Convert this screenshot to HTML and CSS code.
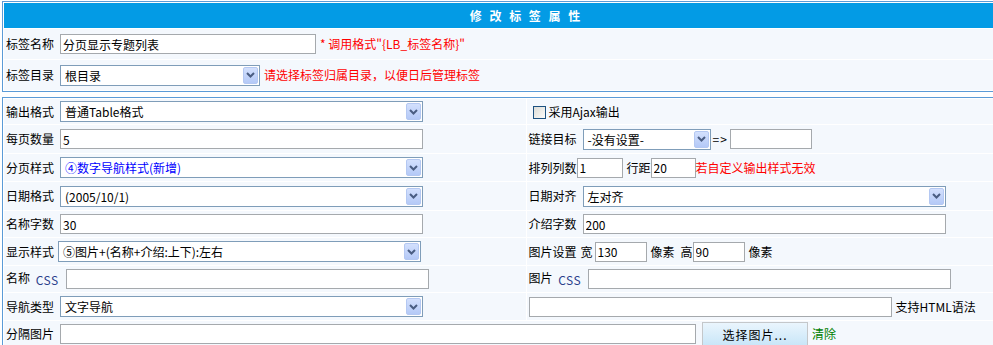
FILE: index.html
```html
<!DOCTYPE html>
<html lang="zh-CN">
<head>
<meta charset="utf-8">
<title>修改标签属性</title>
<link rel="stylesheet" href="styles.css">
</head>
<body>
<table class="tbl top">
  <tr><td class="head">修 改 标 签 属 性</td></tr>
  <tr class="trow"><td><span class="lab">标签名称</span><input class="txt w255" type="text" value="分页显示专题列表"><span class="red note">* 调用格式"{LB_标签名称}"</span></td></tr>
  <tr class="trow"><td><span class="lab">标签目录</span><span class="sel w200"><span class="v">根目录</span><span class="btn"><svg width="9" height="6" viewBox="0 0 9 6"><path d="M1 1 L4.5 4.5 L8 1" fill="none" stroke="#4a5d82" stroke-width="2"/></svg></span></span><span class="red note">请选择标签归属目录，以便日后管理标签</span></td></tr>
</table>

<table class="tbl main">
  <tr>
    <td class="l"><span class="lab">输出格式</span><span class="sel w363"><span class="v">普通Table格式</span><span class="btn"><svg width="9" height="6" viewBox="0 0 9 6"><path d="M1 1 L4.5 4.5 L8 1" fill="none" stroke="#4a5d82" stroke-width="2"/></svg></span></span></td>
    <td class="r"><span class="chk"></span><span class="chklab">采用Ajax输出</span></td>
  </tr>
  <tr>
    <td class="l"><span class="lab">每页数量</span><input class="txt w363" type="text" value="5"></td>
    <td class="r"><span class="lab">链接目标</span><span class="sel w128"><span class="v">-没有设置-</span><span class="btn"><svg width="9" height="6" viewBox="0 0 9 6"><path d="M1 1 L4.5 4.5 L8 1" fill="none" stroke="#4a5d82" stroke-width="2"/></svg></span></span><span class="arrow">=&gt;</span><input class="txt w82" type="text" value=""></td>
  </tr>
  <tr>
    <td class="l"><span class="lab">分页样式</span><span class="sel w363"><span class="v blue">④数字导航样式(新增)</span><span class="btn"><svg width="9" height="6" viewBox="0 0 9 6"><path d="M1 1 L4.5 4.5 L8 1" fill="none" stroke="#4a5d82" stroke-width="2"/></svg></span></span></td>
    <td class="r"><span>排列列数</span><input class="txt w46 tight" type="text" value="1"><span class="sp4">行距</span><input class="txt w45 tight" type="text" value="20"><span class="red">若自定义输出样式无效</span></td>
  </tr>
  <tr>
    <td class="l"><span class="lab">日期格式</span><span class="sel w363"><span class="v">(2005/10/1)</span><span class="btn"><svg width="9" height="6" viewBox="0 0 9 6"><path d="M1 1 L4.5 4.5 L8 1" fill="none" stroke="#4a5d82" stroke-width="2"/></svg></span></span></td>
    <td class="r"><span class="lab">日期对齐</span><span class="sel w363"><span class="v">左对齐</span><span class="btn"><svg width="9" height="6" viewBox="0 0 9 6"><path d="M1 1 L4.5 4.5 L8 1" fill="none" stroke="#4a5d82" stroke-width="2"/></svg></span></span></td>
  </tr>
  <tr>
    <td class="l"><span class="lab">名称字数</span><input class="txt w363" type="text" value="30"></td>
    <td class="r"><span class="lab">介绍字数</span><input class="txt w363" type="text" value="200"></td>
  </tr>
  <tr>
    <td class="l"><span class="lab lab4">显示样式</span><span class="sel w363"><span class="v">⑤图片+(名称+介绍:上下):左右</span><span class="btn"><svg width="9" height="6" viewBox="0 0 9 6"><path d="M1 1 L4.5 4.5 L8 1" fill="none" stroke="#4a5d82" stroke-width="2"/></svg></span></span></td>
    <td class="r"><span>图片设置</span><span class="sp4">宽</span><input class="txt w52 sm" type="text" value="130"><span class="sp4">像素</span><span class="sp6">高</span><input class="txt w52 tight" type="text" value="90"><span class="sp4">像素</span></td>
  </tr>
  <tr>
    <td class="l"><span class="lab lab5">名称 <span class="css">CSS</span></span><input class="txt w363" type="text" value=""></td>
    <td class="r"><span class="lab lab5">图片 <span class="css">CSS</span></span><input class="txt w363" type="text" value=""></td>
  </tr>
  <tr>
    <td class="l"><span class="lab">导航类型</span><span class="sel w363"><span class="v">文字导航</span><span class="btn"><svg width="9" height="6" viewBox="0 0 9 6"><path d="M1 1 L4.5 4.5 L8 1" fill="none" stroke="#4a5d82" stroke-width="2"/></svg></span></span></td>
    <td class="r"><input class="txt w363 tight" type="text" value=""><span class="sp4">支持HTML语法</span></td>
  </tr>
  <tr>
    <td class="l" colspan="2"><span class="lab">分隔图片</span><input class="txt w636" type="text" value=""><button class="pick" type="button">选择图片...</button><span class="clear">清除</span></td>
  </tr>
</table>
</body>
</html>
```

FILE: styles.css
```css
html, body {
  margin: 0;
  padding: 0;
  background: #ffffff;
  overflow: hidden;
}

body {
  font-family: "Noto Sans CJK SC", "Liberation Sans", sans-serif;
  font-size: 12px;
  line-height: 16px;
  color: #000;
}

.tbl {
  width: 1048px;
  margin-left: 2px;
  border: 1px solid #5b9bd7;
  border-collapse: separate;
  border-spacing: 1px;
  background: #ffffff;
  table-layout: fixed;
}

.top {
  margin-top: 1px;
}

.main {
  margin-top: 5px;
}

.tbl td {
  background: #f4f8fd;
  padding: 0 2px;
  vertical-align: middle;
  white-space: nowrap;
}

.tbl td.head {
  background: #039be5;
  color: #fff;
  font-weight: bold;
  text-align: center;
  height: 25px;
  padding: 0;
  letter-spacing: 2px;
  word-spacing: 1px;
}

.trow td {
  height: 30px;
}

.main tr:nth-child(1) td { height: 25px; }
.main tr:nth-child(2) td { height: 28px; }
.main tr:nth-child(3) td { height: 27px; }
.main tr:nth-child(4) td { height: 28px; }
.main tr:nth-child(5) td { height: 26px; }
.main tr:nth-child(6) td { height: 27px; }
.main tr:nth-child(7) td { height: 26px; }
.main tr:nth-child(8) td { height: 27px; }
.main tr:nth-child(9) td { height: 26px; }

.lab {
  display: inline-block;
  vertical-align: middle;
  margin-right: 6px;
}

.lab4 {
  margin-right: 4px;
}

.lab5 {
  margin-right: 7px;
}

.css {
  color: #2b3f8c;
  margin-left: 3px;
  letter-spacing: 0.5px;
}

.tbl td span,
.tbl td input,
.tbl td button {
  vertical-align: middle;
}

.txt {
  box-sizing: border-box;
  height: 20px;
  margin: 0;
  padding: 0 2px;
  border: 1px solid #a5a9ad;
  background: #fff;
  font-family: "Noto Sans CJK SC", sans-serif;
  font-size: 12px;
  line-height: 16px;
  color: #000;
  outline: none;
}

.sel {
  box-sizing: border-box;
  display: inline-flex;
  align-items: center;
  height: 21px;
  border: 1px solid #7f9db9;
  background: #fff;
  padding: 0 1px 0 4px;
}

.sel .v {
  flex: 1;
  white-space: nowrap;
  line-height: 17px;
}

.sel .btn {
  box-sizing: border-box;
  flex: none;
  width: 15px;
  height: 17px;
  border: 1px solid #b4c8f2;
  border-radius: 2px;
  background: linear-gradient(#d3e0fd, #b4c9f7);
  display: flex;
  align-items: center;
  justify-content: center;
}

.blue {
  color: #0000ff;
}

.red {
  color: #ff0000;
}

.note {
  margin-left: 4px;
}

.w255 { width: 256px; }
.w200 { width: 200px; }
.w363 { width: 363px; }
.w128 { width: 128px; }
.w82 { width: 82px; }
.w46 { width: 46px; }
.w45 { width: 45px; }
.w52 { width: 52px; }
.w636 { width: 636px; }

.tight { margin-left: 0; }
.sm { margin-left: 2px; }

.sp4 { margin-left: 4px; }
.sp6 { margin-left: 6px; }

.arrow {
  margin: 0 2px 0 2px;
  letter-spacing: 1px;
}

.chk {
  display: inline-block;
  box-sizing: border-box;
  width: 13px;
  height: 13px;
  margin-left: 4px;
  border: 1px solid #1c5180;
  background: linear-gradient(135deg, #dcdcd7, #fbfbf9);
}

.chklab {
  margin-left: 3px;
}

.pick {
  box-sizing: border-box;
  width: 106px;
  height: 24px;
  margin: 0 0 0 6px;
  padding: 0;
  border: 1px solid #c4c7ca;
  background: linear-gradient(#eaf5fd, #c9e6f8);
  font-family: "Noto Sans CJK SC", sans-serif;
  font-size: 12px;
  color: #000;
  letter-spacing: 1px;
}

.clear {
  margin-left: 4px;
  color: #008000;
}
```
